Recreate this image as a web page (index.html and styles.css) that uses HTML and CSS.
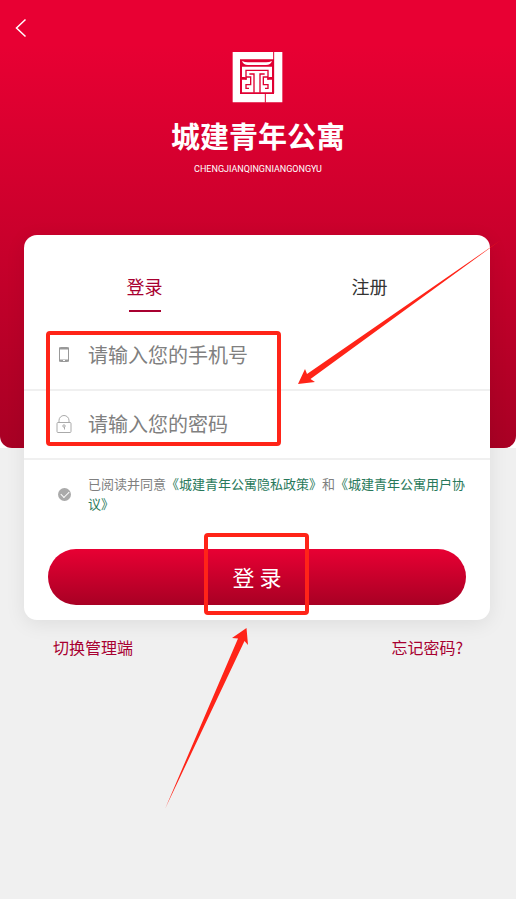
FILE: index.html
```html
<!DOCTYPE html>
<html lang="zh-CN">
<head>
    <meta charset="UTF-8">
    <meta name="viewport" content="width=device-width, initial-scale=1.0">
    <title>城建青年公寓</title>
    <link rel="stylesheet" href="styles.css">
</head>
<body>
    <!-- Header -->
    <header class="hero-wrap">
        <div class="hero">
            <button class="back-button" type="button" aria-label="返回">
                <svg width="12" height="20" viewBox="0 0 12 20" fill="none" stroke="#fff" stroke-width="1.5"><path d="M10.5 1.5 L1.5 10 L10.5 18.5"/></svg>
            </button>
            <div class="brand">
                <svg class="logo" width="52" height="52" viewBox="6 6 156 156" fill="none">
                    <path fill="#fff" d="M8 9H157V160H8Z"/>
                    <path stroke="#e00032" stroke-width="3" d="M131 8V132M106 132V161"/>
                    <path fill="#e00032" d="M30 31H132V135H30Z"/>
                    <path fill="#fff" d="M36 36Q44 40 54 40H108Q118 40 126 36Q122 48 108 48H54Q40 48 36 36Z"/>
                    <path fill="#fff" d="M36 53H126V85H112V92H126V130H36V92H50V85H36Z"/>
                    <path stroke="#e00032" stroke-width="4" d="M48 84V64H114V84M58 75H72V131M104 75H90V131M48 92V84H62V107H48V118H57M114 92V84H100V107H114V118H105M30 86H44M132 86H118"/>
                </svg>
                <h1>城建青年公寓</h1>
                <p>CHENGJIANQINGNIANGONGYU</p>
            </div>
        </div>
    </header>

    <!-- Login Card -->
    <main>
        <form class="card">
            <div class="tabs">
                <button class="tab active" type="button">登录</button>
                <button class="tab" type="button">注册</button>
            </div>

            <div class="fields">
                <div class="field">
                    <label for="phone" aria-label="手机号">
                        <svg width="16" height="20" viewBox="0 0 16 20" fill="none"><rect x="3.500" y="2.500" width="9" height="14" rx="1" stroke="#999"/><path stroke="#999" stroke-width="2" d="M3 3.500H13M3 15.500H13"/><path stroke="#fff" d="M7 15.500H9"/></svg>
                    </label>
                    <input type="tel" id="phone" placeholder="请输入您的手机号">
                </div>
                <div class="field">
                    <label for="password" aria-label="密码">
                        <svg width="16" height="20" viewBox="0 0 16 20" fill="none" stroke="#aaa"><rect x="1" y="8.500" width="14" height="10" rx="1"/><path d="M3 8.500V6.500a5 5 0 0 1 10 0V8.500"/><circle cx="8" cy="12" r="1.200"/><path d="M8.500 13V15.500"/></svg>
                    </label>
                    <input type="password" id="password" placeholder="请输入您的密码">
                </div>
                <span class="mark mark-fields"></span>
            </div>

            <div class="agreement">
                <input type="checkbox" id="agree" checked>
                <p><label for="agree">已阅读并同意</label><a href="#">《城建青年公寓隐私政策》</a>和<a href="#">《城建青年公寓用户协议》</a></p>
            </div>

            <div class="submit">
                <button class="login-button" type="submit">登 录</button>
                <span class="mark mark-login"></span>
            </div>

            <!-- Guide arrows -->
            <svg class="arrow arrow-fields" width="204" height="146" viewBox="298 239 204 146"><path d="M298 384L305 369L307 374L501 240L310.500 379L315 382Z"/></svg>
            <svg class="arrow arrow-login" width="84" height="182" viewBox="165 628 84 182"><path d="M246.500 628L232 638L238 638.500L165 809L244.500 641L248 645Z"/></svg>
        </form>

        <nav class="links">
            <a href="#">切换管理端</a>
            <a href="#">忘记密码?</a>
        </nav>
    </main>
</body>
</html>
```
FILE: styles.css
```css
/* General Styles */
* {
    box-sizing: border-box;
}

body {
    margin: 0;
    min-height: 100vh;
    background: #f0f0f0;
    font-family: "Noto Sans CJK SC", sans-serif;
    color: #333;
}

button,
input {
    font-family: inherit;
    border: none;
    background: none;
    padding: 0;
    margin: 0;
}

a {
    text-decoration: none;
}

svg {
    display: block;
}

/* Header */
.hero-wrap {
    background: #fff;
}

.hero {
    height: 448px;
    padding: 18px 15px;
    background: linear-gradient(#e80033 10%, #a80024);
    border-radius: 0 0 12px 12px;
}

.back-button {
    display: block;
    cursor: pointer;
}

.brand {
    display: flex;
    flex-direction: column;
    align-items: center;
    padding-top: 13px;
    color: #fff;
}

.brand h1 {
    margin: 12px 0 0;
    font-size: 29px;
    line-height: 40px;
}

.brand p {
    margin: 6px 0 0;
    font-family: Roboto, sans-serif;
    font-size: 9px;
    line-height: 16px;
}

/* Login Card */
.card {
    position: relative;
    margin: -213px 26px 0 24px;
    padding-bottom: 15px;
    background: #fff;
    border-radius: 13px;
    box-shadow: 0 4px 20px rgba(0, 0, 0, 0.08);
}

.tabs {
    display: flex;
    height: 87px;
    padding: 34px 8px 10px;
}

.tab {
    flex: 1;
    display: flex;
    flex-direction: column;
    align-items: center;
    font-size: 18px;
    line-height: 34px;
    color: #333;
    cursor: pointer;
}

.tab.active {
    color: #a80030;
}

.tab.active::after {
    content: "";
    width: 32px;
    height: 2px;
    margin-top: 7px;
    background: #a80030;
}

.fields {
    position: relative;
}

.field {
    display: flex;
    align-items: center;
    height: 69px;
    padding: 0 24px 2px 32px;
    border-bottom: 2px solid #f0f0f0;
}

.field input {
    flex: 1;
    min-width: 0;
    height: 40px;
    margin-left: 16px;
    font-size: 20px;
    outline: none;
}

.field input::placeholder {
    color: #808080;
}

/* Agreement */
.agreement {
    display: flex;
    align-items: center;
    padding: 14px 24px 0 34px;
}

.agreement input {
    appearance: none;
    flex: none;
    position: relative;
    width: 13px;
    height: 13px;
    margin-right: 17px;
    border-radius: 50%;
    background: #aaa;
}

.agreement input:checked::after {
    content: "";
    position: absolute;
    left: 3px;
    top: 3px;
    width: 7px;
    height: 4px;
    border: solid #fff;
    border-width: 0 0 1px 1px;
    transform: rotate(-45deg);
}

.agreement p {
    margin: 0;
    font-size: 13px;
    line-height: 20px;
    color: #808080;
}

.agreement a {
    color: #28785a;
}

/* Submit */
.submit {
    position: relative;
    padding: 35px 24px 0;
}

.login-button {
    width: 100%;
    height: 56px;
    padding-bottom: 2px;
    border-radius: 28px;
    background: linear-gradient(#e80033, #a80024);
    font-size: 22px;
    color: #fff;
    cursor: pointer;
}

/* Bottom Links */
.links {
    display: flex;
    justify-content: space-between;
    padding: 15px 53px 0;
    font-size: 16px;
    line-height: 24px;
}

.links a {
    color: #a80030;
}

/* Guide Marks */
.mark {
    position: absolute;
    border: 4px solid #ff2418;
    border-radius: 4px;
    pointer-events: none;
}

.mark-fields {
    left: 22px;
    top: 9px;
    width: 235px;
    height: 115px;
}

.mark-login {
    left: calc(50% - 53px);
    top: 19px;
    width: 105px;
    height: 82px;
}

.arrow {
    position: absolute;
    fill: #ff2418;
    pointer-events: none;
}

.arrow-fields {
    top: 4px;
    right: -12px;
}

.arrow-login {
    top: 393px;
    left: 141px;
}
```
